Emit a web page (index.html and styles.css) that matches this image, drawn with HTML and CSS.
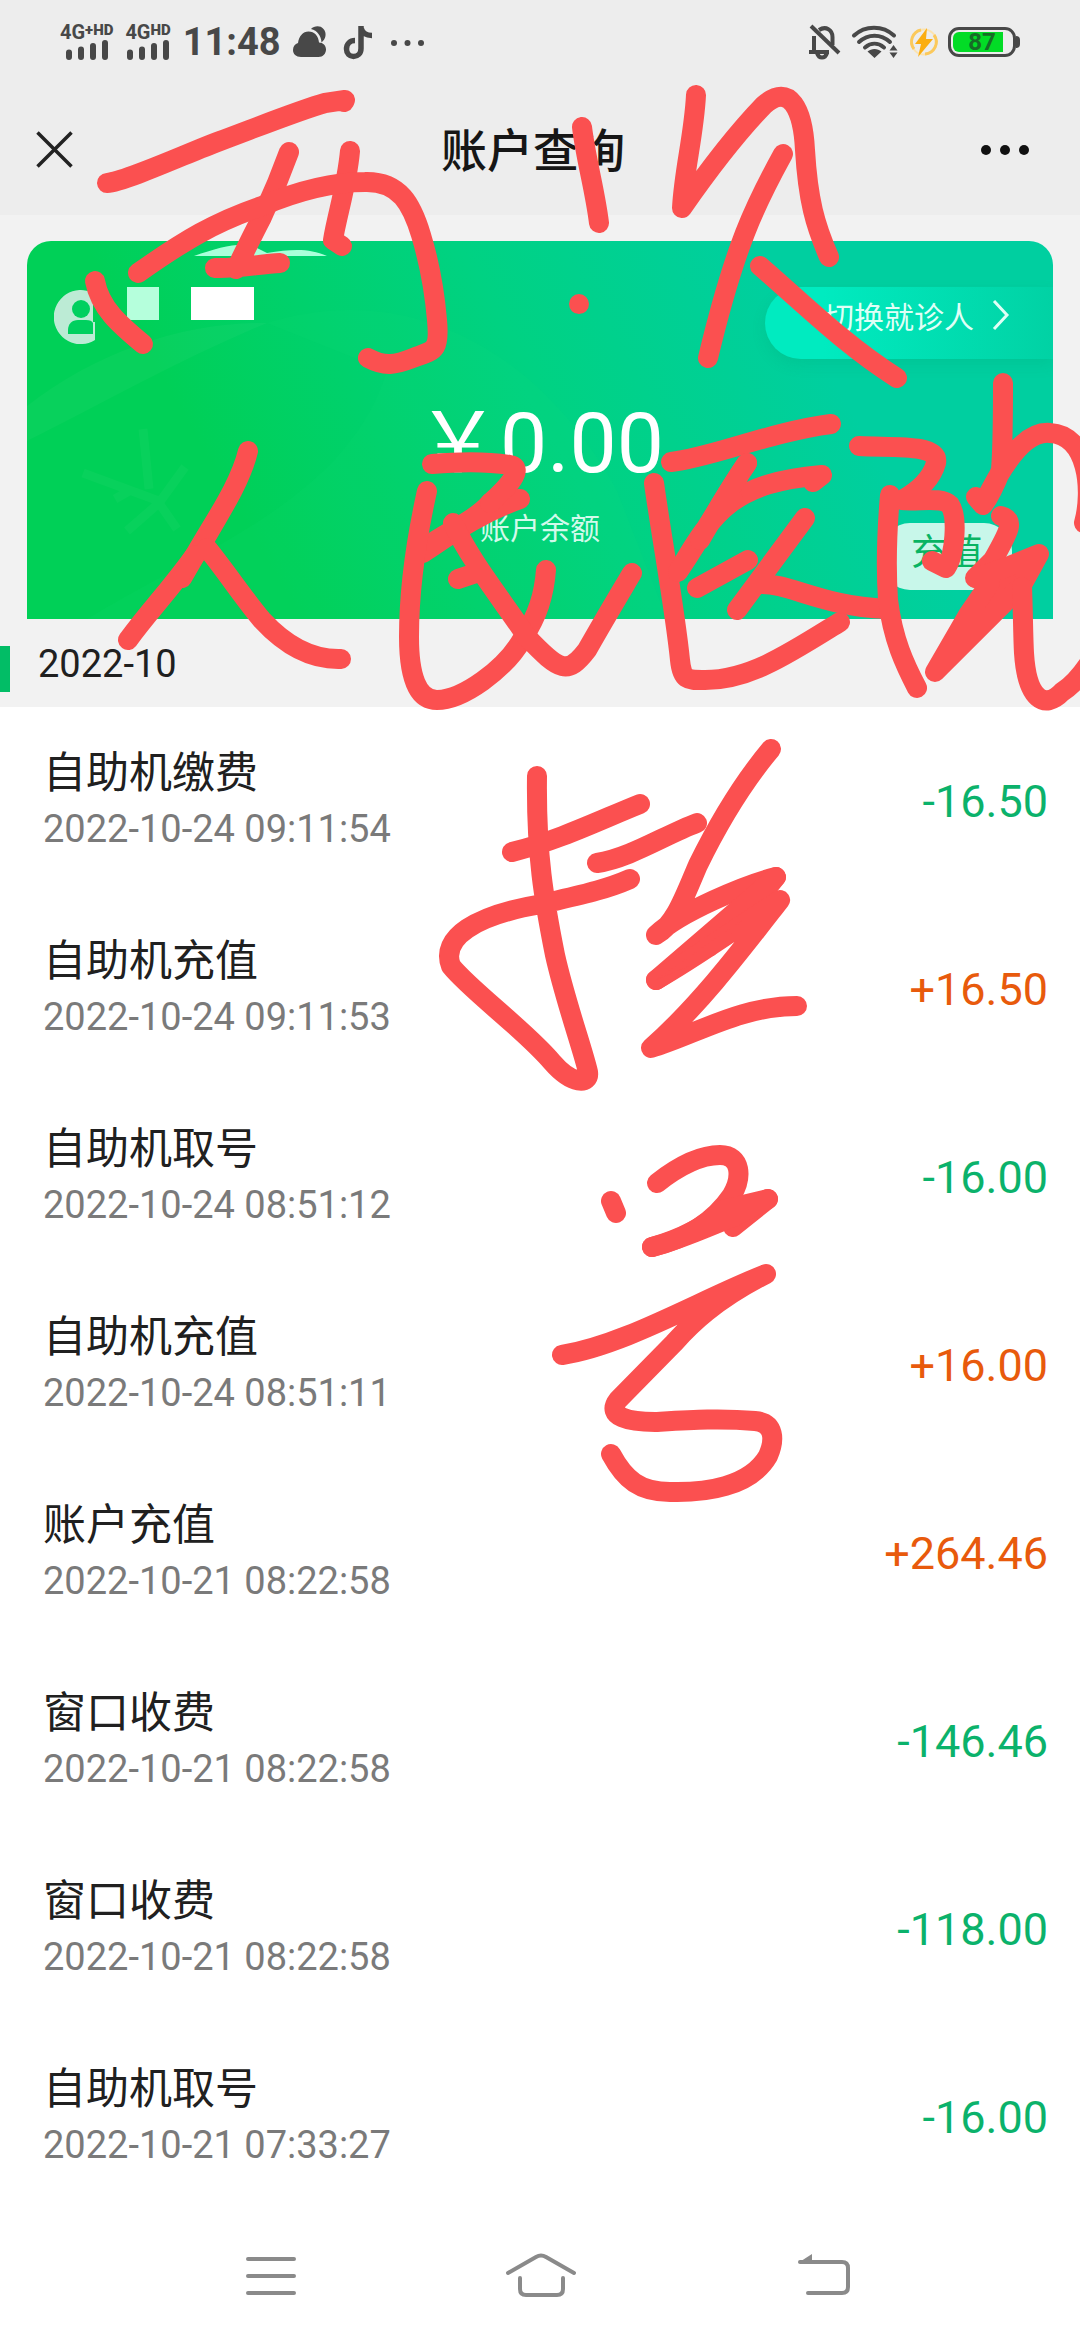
FILE: index.html
```html
<!DOCTYPE html>
<html lang="zh-CN">
<head>
<meta charset="utf-8">
<meta name="viewport" content="width=device-width, initial-scale=1">
<title>账户查询</title>
<link rel="stylesheet" href="styles.css">
</head>
<body>
<div class="screen">
  <header class="top">
    <div class="status">
      <div class="status-group">
        <div class="signal">
          <span class="net">4G<b class="plus">+</b><b class="hd">HD</b></span>
          <svg width="44" height="20" viewBox="0 0 44 20"><path class="bars" d="M4 12.500V17M16 9.500V17M28 6V17M40 3V17"/></svg>
        </div>
        <div class="signal">
          <span class="net">4G<b class="hd">HD</b></span>
          <svg width="44" height="20" viewBox="0 0 44 20"><path class="bars" d="M4 12.500V17M16 9.500V17M28 6V17M40 3V17"/></svg>
        </div>
        <time class="clock">11:48</time>
        <svg width="36" height="34" viewBox="0 0 36 34"><path fill="#484848" d="M8 32C3 32 0 29 0 25c0-3.500 2-6 5-7C6 11 10 6.500 15.500 6.500c6 0 10 4.500 10.500 11 4 0 7 3 7 7S30 32 25.500 32zM18 4c3-3 9-4 12.500 0 3.500 4 2.500 10-2 13.500C28 11 24.500 5.500 18 4z"/></svg>
        <svg width="36" height="36" viewBox="0 0 36 36"><path fill="none" stroke="#484848" stroke-width="5.500" d="M14 16.500C9 16.500 5.500 20 5.500 25c0 4.500 3 7.500 7 7.500s7.500-3 7.500-8V2M20 4c1.500 5 5 7.500 11 7.500"/></svg>
        <svg width="36" height="34" viewBox="0 0 36 34"><g fill="#484848"><circle cx="5" cy="18" r="3"/><circle cx="18.500" cy="18" r="3"/><circle cx="32" cy="18" r="3"/></g></svg>
      </div>
      <div class="status-group status-right">
        <svg width="34" height="36" viewBox="0 0 34 36"><g fill="none" stroke="#484848" stroke-width="4"><path d="M6 12v15M11 6C18 1.500 24.500 6 24.500 13v8M1 28h20M9 29c2 6 8 6 10 0"/><path d="M3 2l28 27"/></g></svg>
        <svg width="50" height="36" viewBox="0 0 50 36"><g fill="none" stroke="#484848" stroke-width="4" stroke-linecap="round"><path d="M4 11.500C15 1 33 1 44 11.500M9 18c9-8.500 22-8.500 31 0M15 23.500c6-5 13-5 19 0"/></g><path fill="#484848" d="M24.500 34l-7-6.500c4-3.500 10-3.500 14 0zM43.500 21l4 5.500h-8zM43.500 34l4-5.500h-8z"/></svg>
        <svg width="32" height="32" viewBox="0 0 32 32"><circle cx="16" cy="16" r="12.500" fill="none" stroke="#fbe3b0" stroke-width="2"/><path d="M6 23A12 12 0 0 1 13 4M26 9a12 12 0 0 1-9 19" fill="none" stroke="#fbc95c" stroke-width="3"/><path d="M19 2L7 18h6l-3 13 15-18h-7z" fill="#fbae11"/></svg>
        <div class="battery"><span class="battery-level">87</span></div>
      </div>
    </div>
    <div class="titlebar">
      <button class="icon-button" type="button" aria-label="关闭"><svg width="37" height="37" viewBox="0 0 37 37"><path d="M1.500 1.500l34 34M35.500 1.500l-34 34" stroke="#222" stroke-width="3.500"/></svg></button>
      <h1 class="title">账户查询</h1>
      <button class="icon-button more" type="button" aria-label="更多"><svg width="50" height="12" viewBox="0 0 50 12"><g fill="#111"><circle cx="6" cy="6" r="5"/><circle cx="25" cy="6" r="5"/><circle cx="44" cy="6" r="5"/></g></svg></button>
    </div>
  </header>

  <main>
    <section class="card">
      <svg class="card-art" viewBox="0 0 1026 378" preserveAspectRatio="none" aria-hidden="true">
        <path d="M0 165C70 110 160 80 240 82 160 115 80 160 0 200z" fill="#fff" opacity=".03"/>
        <path d="M240 82C390 35 520 120 590 250L640 378H60C170 310 320 260 360 130z" fill="#19e27f" opacity=".08"/>
        <path d="M116 188l6 60M56 232l76 28M88 258l14-8M132 262l26-36M132 262l-32 28M132 262l18 26" fill="none" stroke="#fff" stroke-width="9" opacity=".03"/>
        <path d="M167 15C195 5 218 0 230 7l10 5c25-4 42-5 60 3H167z" fill="#a9ffda"/>
      </svg>
      <div class="card-head">
        <div class="patient">
          <svg width="54" height="54" viewBox="0 0 54 54"><path d="M39 3A27 27 0 1 0 41 50V32h-2z" fill="#bcebd5"/><ellipse cx="27" cy="19" rx="9" ry="9" fill="#00d05f"/><path d="M14 44v-4c0-6 4-10 10-10h8c4 0 6 1 7 3v11z" fill="#00d05f"/></svg>
          <i class="mask mask-small"></i><i class="mask mask-wide"></i>
        </div>
        <button class="switch" type="button">切换就诊人<svg width="18" height="32" viewBox="0 0 18 32"><path d="M2 2l13 14L2 30" fill="none" stroke="#dffff6" stroke-width="3"/></svg></button>
      </div>
      <p class="balance">￥0.00</p>
      <p class="balance-label">账户余额</p>
      <button class="recharge" type="button">充值</button>
    </section>

    <h2 class="month">2022-10</h2>
    <ul class="records">
      <li class="record"><div><p class="name">自助机缴费</p><time class="date">2022-10-24 09:11:54</time></div><span class="amount">-16.50</span></li>
      <li class="record"><div><p class="name">自助机充值</p><time class="date">2022-10-24 09:11:53</time></div><span class="amount income">+16.50</span></li>
      <li class="record"><div><p class="name">自助机取号</p><time class="date">2022-10-24 08:51:12</time></div><span class="amount">-16.00</span></li>
      <li class="record"><div><p class="name">自助机充值</p><time class="date">2022-10-24 08:51:11</time></div><span class="amount income">+16.00</span></li>
      <li class="record"><div><p class="name">账户充值</p><time class="date">2022-10-21 08:22:58</time></div><span class="amount income">+264.46</span></li>
      <li class="record"><div><p class="name">窗口收费</p><time class="date">2022-10-21 08:22:58</time></div><span class="amount">-146.46</span></li>
      <li class="record"><div><p class="name">窗口收费</p><time class="date">2022-10-21 08:22:58</time></div><span class="amount">-118.00</span></li>
      <li class="record"><div><p class="name">自助机取号</p><time class="date">2022-10-21 07:33:27</time></div><span class="amount">-16.00</span></li>
    </ul>
  </main>

  <nav class="navbar">
    <button class="icon-button" type="button" aria-label="菜单"><svg width="80" height="48" viewBox="0 0 80 48"><path class="nav-line" d="M18 7h46M18 24h46M18 41h46"/></svg></button>
    <button class="icon-button" type="button" aria-label="主页"><svg width="80" height="48" viewBox="0 0 80 48"><path class="nav-line" d="M8 21L36 5q5-3 10 0l28 16M20 26v11q0 6 6 6h31q6 0 6-6V26"/></svg></button>
    <button class="icon-button" type="button" aria-label="返回"><svg width="80" height="48" viewBox="0 0 80 48"><path class="nav-line" d="M30 10h42q6 0 6 6v19q0 6-6 6H38"/><path d="M28 11L42 2v9z" fill="#8a8a8a"/></svg></button>
  </nav>

  <!-- Handwritten marker notes over the page -->
  <svg class="ink" viewBox="0 0 1080 2340" preserveAspectRatio="xMidYMin meet" aria-hidden="true">
    <path d="M107 183C125 182 190 152 220 141C255 128 300 110 325 103L345 100L344 102"/>
    <path d="M289 152C280 177 270 200 262 217C250 240 243 255 236 269M215 268C235 269 260 264 280 263"/>
    <path d="M350 151C347 185 337 215 333 240L342 246"/>
    <path d="M138 273C185 240 215 222 262 206C300 190 335 182 365 182C400 181 412 205 421 235C428 258 434 285 437 320C440 352 434 350 413 358C395 365 385 367 368 358"/>
    <path d="M95 281C100 308 120 325 143 344"/>
    <path d="M582 127C586 160 595 190 599 223M579 304v.1"/>
    <path d="M696 95C694 135 684 170 682 208C705 175 735 135 764 105C790 82 803 110 805 150C808 200 815 225 829 257"/>
    <path d="M783 154C755 205 735 245 708 358M760 266C805 305 845 345 897 378"/>
    <path class="solid" d="M248 451C240 485 215 520 195 555L182 578C215 520 240 485 248 451"/>
    <path d="M195 555C170 590 150 610 128 640M207 548C225 570 245 600 262 620C285 645 310 660 341 659"/>
    <path class="solid" d="M490 503L520 499C480 513 450 535 423 553L427 546C450 530 475 520 490 503"/>
    <path d="M432 464C455 462 485 461 510 465C525 468 508 487 490 503"/>
    <path d="M427 491C415 545 409 590 409 637C409 675 417 700 437 700C462 700 505 670 523 638C538 615 544 595 546 570"/>
    <path d="M453 523C470 560 500 597 527 637C560 672 568 675 587 650C604 620 616 600 632 573M458 579L479 572"/>
    <path d="M671 462C710 458 770 432 831 424M654 483C662 540 675 610 680 660C682 681 688 680 705 680C750 680 790 653 840 622"/>
    <path d="M747 463C725 495 705 532 678 572C715 508 735 483 822 475L813 482M697 588L748 560M805 518L737 610M760 584C790 583 820 606 887 609"/>
    <path class="solid" d="M747 463C725 495 715 515 700 540C712 516 722 508 733 500"/>
    <path d="M859 446C890 448 940 443 936 463C932 477 920 490 902 500C918 502 942 496 950 505C958 517 955 555 946 568L932 561M890 495C887 530 886 570 888 600C893 640 905 665 917 688"/>
    <path d="M1003 383C1003 415 1003 445 1001 470C993 490 987 500 983 505L976 497M983 505C995 480 1020 430 1050 433C1088 435 1093 490 1084 523"/>
    <path d="M1001 516C1015 520 1010 530 993 560L975 578"/>
    <path class="solid" d="M976 578L1007 567L1039 554L1022 585L935 672L968 615L990 583z"/>
    <path d="M1022 587C1023 610 1023 635 1024 653C1027 700 1045 710 1062 692C1070 687 1080 677 1090 662"/>
    <path d="M537 776C536 855 544 900 555 955C565 1000 583 1050 588 1072C590 1085 572 1085 552 1062C525 1030 470 990 451 966C440 938 475 915 542 904C580 895 605 890 630 879M512 852C560 840 600 820 640 804M597 863C630 858 665 835 697 823"/>
    <path class="solid" d="M776 877C745 885 680 912 656 935C675 925 685 895 698 865C720 820 745 780 771 749C745 780 720 820 698 865C685 895 675 925 656 935"/>
    <path class="solid" d="M776 877L656 980L733 930z"/>
    <path d="M656 980C700 955 740 925 780 900C745 945 700 1005 651 1048C695 1035 740 1006 797 1006"/>
    <path class="solid" d="M656 980L742 920L715 955z" stroke="none"/>
    <path d="M611 1201L616 1213M657 1183C680 1165 700 1155 720 1155C742 1155 742 1178 732 1195C715 1220 690 1238 652 1247M768 1199L733 1227"/>
    <path class="solid" d="M652 1247C690 1236 710 1222 722 1210L768 1199L733 1217C710 1226 680 1240 652 1247"/>
    <path d="M562 1355C625 1345 700 1300 766 1274C715 1300 690 1325 674 1343L618 1400C605 1417 630 1422 655 1422C690 1420 720 1418 755 1421C775 1423 775 1440 768 1456C750 1487 705 1493 670 1492C640 1492 625 1480 611 1454"/>
  </svg>
</div>
</body>
</html>
```
FILE: styles.css
```css
* {
  box-sizing: border-box;
}

body,
h1,
h2,
p,
ul {
  margin: 0;
  padding: 0;
}

body {
  background: #fff;
  color: #202020;
  font-family: Roboto, "Noto Sans CJK SC", sans-serif;
}

button {
  border: 0;
  padding: 0;
  background: none;
  color: inherit;
  font: inherit;
}

svg {
  display: block;
}

.screen {
  position: relative;
  overflow: hidden;
}

.top {
  background: #ededed;
}

.status {
  display: flex;
  align-items: center;
  justify-content: space-between;
  height: 84px;
  padding: 0 60px;
  color: #484848;
}

.status-group {
  display: flex;
  align-items: center;
  gap: 12px;
}

.status-right {
  gap: 8px;
}

.signal {
  display: flex;
  flex-direction: column;
  align-items: center;
}

.net {
  display: flex;
  font-size: 20px;
  font-weight: 700;
  line-height: 16px;
}

.plus,
.hd {
  font-size: 15px;
  line-height: 12px;
}

.bars {
  fill: none;
  stroke: #484848;
  stroke-width: 6;
  stroke-linecap: round;
}

.clock {
  font-size: 38px;
  font-weight: 700;
}

.battery {
  position: relative;
  width: 68px;
  height: 30px;
  margin-right: 4px;
  padding: 2px;
  border: 3px solid #484848;
  border-radius: 11px;
}

.battery::after {
  content: "";
  position: absolute;
  top: 6px;
  right: -7px;
  width: 4px;
  height: 12px;
  border-radius: 0 4px 4px 0;
  background: #484848;
}

.battery-level {
  display: block;
  width: 50px;
  height: 20px;
  padding-left: 8px;
  border-radius: 6px 0 0 6px;
  background: #02dc26;
  color: #176b27;
  font-size: 24px;
  font-weight: 700;
  line-height: 20px;
  text-align: center;
}

.titlebar {
  display: grid;
  grid-template-columns: 1fr auto 1fr;
  align-items: center;
  height: 131px;
  padding: 0 50px 0 36px;
}

.more {
  justify-self: end;
}

.icon-button {
  width: max-content;
}

.title {
  padding-bottom: 6px;
  color: #161616;
  font-size: 46px;
  font-weight: 500;
}

main {
  padding-top: 26px;
  background: #f2f2f2;
}

.card {
  position: relative;
  height: 378px;
  margin: 0 27px;
  overflow: hidden;
  border-radius: 24px 24px 0 0;
  background: linear-gradient(60deg, #00d057 22%, #00d282 52%, #00cfa0 76%);
  color: #fff;
  text-align: center;
}

.card-art {
  position: absolute;
  inset: 0;
  width: 100%;
  height: 100%;
}

.card-head {
  position: relative;
  display: flex;
  justify-content: space-between;
  align-items: flex-start;
  padding: 46px 0 0 27px;
}

.patient {
  display: flex;
  gap: 32px;
}

.patient svg {
  margin-top: 3px;
  margin-right: -13px;
}

.mask {
  height: 33px;
  background: #fff;
}

.mask-small {
  width: 32px;
  background: #b5ffdc;
}

.mask-wide {
  width: 63px;
}

.switch {
  display: flex;
  align-items: center;
  justify-content: flex-end;
  gap: 18px;
  width: 288px;
  height: 72px;
  padding: 0 43px 16px 0;
  border-radius: 36px 0 0 36px;
  background: linear-gradient(90deg, #00ebc0 20%, #01d2a4);
  box-shadow: 0 6px 14px rgba(0, 150, 100, .15);
  color: #dffff6;
  font-size: 30px;
}

.balance {
  position: relative;
  margin-top: 37px;
  font-size: 84px;
  line-height: 96px;
}

.balance-label {
  position: relative;
  margin-top: 17px;
  color: #d2faeb;
  font-size: 30px;
  line-height: 40px;
}

.recharge {
  position: absolute;
  right: 41px;
  bottom: 29px;
  width: 130px;
  height: 67px;
  padding-bottom: 8px;
  border-radius: 28px;
  background: #c8f7ea;
  color: #08b463;
  font-size: 36px;
  line-height: 56px;
}

.month {
  display: flex;
  align-items: center;
  height: 46px;
  margin: 27px 0 15px;
  padding: 0 0 10px 28px;
  border-left: 10px solid #02bd66;
  font-size: 38px;
  font-weight: 400;
}

.records {
  background: #fff;
  list-style: none;
}

.record {
  display: flex;
  align-items: center;
  justify-content: space-between;
  height: 188px;
  padding: 0 32px 0 43px;
}

.name {
  font-size: 43px;
  line-height: 56px;
}

.date {
  display: block;
  color: #7a7a7a;
  font-size: 38px;
  line-height: 56px;
}

.amount {
  color: #0bb26b;
  font-size: 45px;
}

.income {
  color: #e85a0c;
}

.navbar {
  display: grid;
  grid-template-columns: repeat(3, 1fr);
  justify-items: center;
  align-items: center;
  height: 129px;
  padding: 0 12.5%;
  background: #fff;
}

.nav-line {
  fill: none;
  stroke: #8a8a8a;
  stroke-width: 4;
  stroke-linecap: round;
}

.ink {
  position: absolute;
  top: 0;
  left: 0;
  width: 100%;
  pointer-events: none;
  fill: none;
  stroke: #fb5050;
  stroke-width: 20;
  stroke-linecap: round;
  stroke-linejoin: round;
}

.solid {
  fill: #fb5050;
}
```
